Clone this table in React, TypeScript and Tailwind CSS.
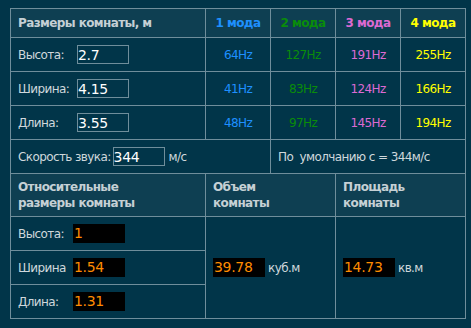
import React from 'react';

const modes = [
  { label: '1 мода', color: 'text-[#1e90ff]' },
  { label: '2 мода', color: 'text-[#0a8c0a]' },
  { label: '3 мода', color: 'text-[#dc6ad2]' },
  { label: '4 мода', color: 'text-[#ffff00]' },
];

const rows = [
  { label: 'Высота:', value: '2.7', hz: ['64Hz', '127Hz', '191Hz', '255Hz'] },
  { label: 'Ширина:', value: '4.15', hz: ['41Hz', '83Hz', '124Hz', '166Hz'] },
  { label: 'Длина:', value: '3.55', hz: ['48Hz', '97Hz', '145Hz', '194Hz'] },
];

const relative = [
  { label: 'Высота:', value: '1' },
  { label: 'Ширина', value: '1.54' },
  { label: 'Длина:', value: '1.31' },
];

const cell = 'border border-[#6f8e9b] p-0';

const NumInput = ({ value }: { value: string }) => (
  <input
    readOnly
    value={value}
    className="w-[52px] h-[19px] border border-[#6f8e9b] bg-transparent text-white text-[14px] leading-[17px] pl-0 outline-none tracking-[-0.3px]"
  />
);

const OrangeBox = ({ value }: { value: string }) => (
  <span className="inline-block w-[52px] h-[19px] bg-black text-[#ff8c00] text-[14px] leading-[19px] pl-px tracking-[-0.3px]">
    {value}
  </span>
);

export default function App() {
  return (
    <div
      className="w-full h-[328px] bg-[#013549] pt-[8px] pl-[10px] text-[#cfd8dc] text-[12px] tracking-[-0.6px]"
      style={{ fontFamily: '"DejaVu Sans", Verdana, sans-serif' }}
    >
      <table className="border-collapse table-fixed w-[456px]">
        <colgroup>
          <col className="w-[195px]" />
          <col className="w-[65px]" />
          <col className="w-[65px]" />
          <col className="w-[65px]" />
          <col className="w-[65px]" />
        </colgroup>
        <tbody>
          <tr className="h-[29px] bg-[#0e3f52] font-bold text-[#c5d0d5]">
            <td className={`${cell} pl-[7px]`}>Размеры комнаты, м</td>
            {modes.map((m) => (
              <td key={m.label} className={`${cell} text-center ${m.color}`}>
                {m.label}
              </td>
            ))}
          </tr>
          {rows.map((r) => (
            <tr key={r.label} className="h-[34px]">
              <td className={`${cell} pl-[7px]`}>
                <div className="flex items-center">
                  <span className="w-[59px]">{r.label}</span>
                  <NumInput value={r.value} />
                </div>
              </td>
              {r.hz.map((h, i) => (
                <td key={h} className={`${cell} text-center ${modes[i].color}`}>
                  {h}
                </td>
              ))}
            </tr>
          ))}
          <tr className="h-[34px]">
            <td colSpan={2} className={`${cell} pl-[7px]`}>
              <div className="flex items-center">
                <span className="mr-[2px]">Скорость звука:</span>
                <NumInput value="344" />
                <span className="ml-[4px]">м/с</span>
              </div>
            </td>
            <td colSpan={3} className={`${cell} pl-[7px]`}>
              По&nbsp; умолчанию c = 344м/с
            </td>
          </tr>
          <tr className="h-[43px] bg-[#0e3f52] font-bold text-[#c5d0d5] leading-[16px]">
            <td className={`${cell} pl-[7px]`}>
              Относительные
              <br />
              размеры комнаты
            </td>
            <td colSpan={2} className={`${cell} pl-[7px]`}>
              Объем
              <br />
              комнаты
            </td>
            <td colSpan={2} className={`${cell} pl-[7px]`}>
              Площадь
              <br />
              комнаты
            </td>
          </tr>
          {relative.map((r, i) => (
            <tr key={r.label} className="h-[34px]">
              <td className={`${cell} pl-[7px]`}>
                <div className="flex items-center">
                  <span className="w-[55px]">{r.label}</span>
                  <OrangeBox value={r.value} />
                </div>
              </td>
              {i === 0 && (
                <>
                  <td rowSpan={3} colSpan={2} className={`${cell} pl-[7px]`}>
                    <div className="flex items-center">
                      <OrangeBox value="39.78" />
                      <span className="ml-[3px]">куб.м</span>
                    </div>
                  </td>
                  <td rowSpan={3} colSpan={2} className={`${cell} pl-[7px]`}>
                    <div className="flex items-center">
                      <OrangeBox value="14.73" />
                      <span className="ml-[3px]">кв.м</span>
                    </div>
                  </td>
                </>
              )}
            </tr>
          ))}
        </tbody>
      </table>
    </div>
  );
}
